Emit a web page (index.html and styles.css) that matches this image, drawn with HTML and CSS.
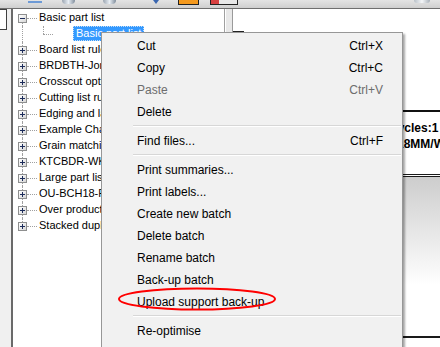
FILE: index.html
```html
<!doctype html>
<html lang="en">
<head>
    <meta charset="UTF-8">
    <title>Batches</title>
    <link rel="stylesheet" href="styles.css">
</head>
<body>

<div class="toolbar">
    <span class="tb tb-line"></span>
    <span class="tb tb-disk"></span>
    <span class="tb tb-disk2"></span>
    <span class="tb tb-arrow"></span>
    <span class="tb tb-orange"></span>
    <span class="tb tb-red"></span>
    <span class="tb tb-help"></span>
</div>

<div class="main">
    <div class="side">
        <div class="side-box"></div>
    </div>

    <div class="tree">
        <div class="row first">
            <span class="twig"><span class="exp"></span></span>
            <span class="label">Basic part list</span>
        </div>
        <div class="row child">
            <span class="twig"></span>
            <span class="twig2"></span>
            <span class="label selected">Basic part list</span>
        </div>
        <div class="row"><span class="twig"><span class="exp plus"></span></span><span class="label">Board list rules</span></div>
        <div class="row"><span class="twig"><span class="exp plus"></span></span><span class="label">BRDBTH-Jones</span></div>
        <div class="row"><span class="twig"><span class="exp plus"></span></span><span class="label">Crosscut options</span></div>
        <div class="row"><span class="twig"><span class="exp plus"></span></span><span class="label">Cutting list rules</span></div>
        <div class="row"><span class="twig"><span class="exp plus"></span></span><span class="label">Edging and labels</span></div>
        <div class="row"><span class="twig"><span class="exp plus"></span></span><span class="label">Example Chairs</span></div>
        <div class="row"><span class="twig"><span class="exp plus"></span></span><span class="label">Grain matching</span></div>
        <div class="row"><span class="twig"><span class="exp plus"></span></span><span class="label">KTCBDR-WK22</span></div>
        <div class="row"><span class="twig"><span class="exp plus"></span></span><span class="label">Large part list</span></div>
        <div class="row"><span class="twig"><span class="exp plus"></span></span><span class="label">OU-BCH18-F1</span></div>
        <div class="row"><span class="twig"><span class="exp plus"></span></span><span class="label">Over production</span></div>
        <div class="row last"><span class="twig"><span class="exp plus"></span></span><span class="label">Stacked duplicates</span></div>
    </div>

    <div class="splitter"></div>

    <div class="view">
        <div class="corner"></div>
        <div class="info">
            <div class="info-line first-line">Cycles:1</div>
            <div class="info-line second-line">18MM/WHITE</div>
        </div>
        <div class="chart"></div>
    </div>
</div>

<!-- context menu -->
<div class="menu">
    <div class="item"><span>Cut</span><span>Ctrl+X</span></div>
    <div class="item"><span>Copy</span><span>Ctrl+C</span></div>
    <div class="item disabled"><span>Paste</span><span>Ctrl+V</span></div>
    <div class="item"><span>Delete</span></div>
    <div class="sep"></div>
    <div class="item"><span>Find files...</span><span>Ctrl+F</span></div>
    <div class="sep"></div>
    <div class="item"><span>Print summaries...</span></div>
    <div class="item"><span>Print labels...</span></div>
    <div class="item"><span>Create new batch</span></div>
    <div class="item"><span>Delete batch</span></div>
    <div class="item"><span>Rename batch</span></div>
    <div class="item"><span>Back-up batch</span></div>
    <div class="item"><span>Upload support back-up</span></div>
    <div class="sep"></div>
    <div class="item"><span>Re-optimise</span></div>
</div>

<svg class="ring" width="162" height="26" viewBox="0 0 162 26">
    <ellipse cx="80" cy="13" rx="78" ry="10.5" fill="none" stroke="#ff0000" stroke-width="2"/>
</svg>

</body>
</html>
```

FILE: styles.css
```css
body {
    margin: 0;
    width: 440px;
    height: 347px;
    overflow: hidden;
    background: #f0f0f0;
    font-family: "Liberation Sans", Arial, sans-serif;
    position: relative;
}

/* toolbar, only the bottom of it shows */
.toolbar {
    height: 8px;
    border-bottom: 1px solid #6f6f6f;
    background: linear-gradient(#e4e4e4, #cfcfcf);
    display: flex;
    align-items: flex-start;
    overflow: hidden;
}
.tb {
    display: block;
    flex: none;
}
.tb-line {
    margin-left: 28px;
    margin-top: 1px;
    width: 14px;
    height: 2px;
    background: #6d9ad6;
}
.tb-disk {
    margin-left: 20px;
    width: 13px;
    height: 4px;
    border-radius: 0 0 4px 4px;
    background: linear-gradient(90deg, #9aa4b0, #e8eef4, #7d8a99);
}
.tb-disk2 {
    margin-left: 28px;
    width: 13px;
    height: 4px;
    border-radius: 0 0 4px 4px;
    background: linear-gradient(90deg, #9aa4b0, #e8eef4, #7d8a99);
}
.tb-arrow {
    margin-left: 37px;
    width: 0;
    height: 0;
    border-left: 3px solid transparent;
    border-right: 3px solid transparent;
    border-top: 4px solid #3a66b0;
}
.tb-orange {
    margin-left: 19px;
    width: 19px;
    height: 4px;
    background: #f59a1e;
    border: 1px solid #222;
    border-top: none;
}
.tb-red {
    margin-left: 11px;
    width: 26px;
    height: 4px;
    border: 1px solid #222;
    border-top: none;
    background: linear-gradient(90deg, #d84040 0 8px, #e8e8e8 8px);
}
.tb-help {
    margin-left: 176px;
    width: 16px;
    height: 3px;
    border-radius: 0 0 8px 8px;
    background: linear-gradient(90deg, #b8c0c8, #f4f6f8, #a8b0b8);
}

.main {
    display: flex;
    height: 338px;
}

.side {
    width: 11px;
    flex: none;
}
.side-box {
    width: 7px;
    height: 21px;
    box-sizing: border-box;
    background: #fff;
    border: 1px solid #404040;
    border-left: none;
}

/* tree */
.tree {
    width: 211px;
    flex: none;
    background: #fff;
    border-left: 2px solid #6a6a6a;
    border-right: 1px solid #a0a0a0;
    padding-top: 1px;
    font-size: 11px;
    color: #000;
}
.row {
    display: flex;
    height: 16px;
    white-space: nowrap;
}
.twig {
    position: relative;
    width: 26px;
    flex: none;
}
.twig::before {
    content: "";
    position: absolute;
    left: 9px;
    top: 0;
    bottom: 0;
    border-left: 1px dotted #a0a0a0;
}
.twig::after {
    content: "";
    position: absolute;
    left: 14px;
    top: 8px;
    width: 10px;
    border-top: 1px dotted #a0a0a0;
}
.row.first .twig::before {
    top: 8px;
}
.row.last .twig::before {
    bottom: 8px;
}
.row.child .twig::after {
    display: none;
}
.twig2 {
    position: relative;
    width: 34px;
    flex: none;
}
.twig2::before {
    content: "";
    position: absolute;
    left: 4px;
    top: 0;
    height: 8px;
    border-left: 1px dotted #a0a0a0;
}
.twig2::after {
    content: "";
    position: absolute;
    left: 4px;
    top: 8px;
    width: 10px;
    border-top: 1px dotted #a0a0a0;
}
.exp {
    position: absolute;
    left: 5px;
    top: 4px;
    width: 9px;
    height: 9px;
    box-sizing: border-box;
    border: 1px solid #8e8f8f;
    background: linear-gradient(135deg, #ffffff, #d6d6d6);
    z-index: 1;
}
.exp::before {
    content: "";
    position: absolute;
    left: 1px;
    top: 3px;
    width: 5px;
    height: 1px;
    background: #1c2c5a;
}
.exp.plus::after {
    content: "";
    position: absolute;
    left: 3px;
    top: 1px;
    width: 1px;
    height: 5px;
    background: #1c2c5a;
}
.label {
    height: 15px;
    line-height: 15px;
}
.label.selected {
    background: #3399ff;
    color: #fff;
    padding: 0 2px;
    border: 1px dotted #c7def5;
    line-height: 13px;
    box-sizing: border-box;
}

.splitter {
    width: 6px;
    flex: none;
    background: #e8e8e8;
    border-left: 1px solid #fff;
    border-right: 1px solid #9a9a9a;
}

/* right view */
.view {
    flex: 1;
    background: #fff;
    display: flex;
    flex-direction: column;
    overflow: hidden;
}
.corner {
    margin-top: 22px;
    width: 11px;
    height: 1px;
    background: #222;
}
.info {
    margin-top: 78px;
    border-top: 2px solid #111;
    padding-top: 8px;
    font-size: 12px;
    font-weight: bold;
    white-space: nowrap;
}
.info-line {
    line-height: 16px;
}
.first-line {
    padding-left: 156px;
}
.second-line {
    padding-left: 164px;
}
.chart {
    margin-top: 22px;
    height: 159px;
    flex: none;
    border-top: 3px double #1a1a1a;
    border-bottom: 2px solid #1a1a1a;
    background: linear-gradient(#cdcdcd, #ffffff 68%);
}

/* context menu */
.menu {
    position: absolute;
    left: 101px;
    top: 32px;
    width: 302px;
    box-sizing: border-box;
    background: #f1f1f1;
    border: 1px solid #979797;
    box-shadow: 2px 2px 2px rgba(0, 0, 0, 0.35);
    padding: 2px 0 24px;
    font-size: 12px;
    color: #000;
}
.item {
    height: 22px;
    line-height: 22px;
    display: flex;
    justify-content: space-between;
    padding: 0 19px 0 35px;
}
.item.disabled {
    color: #6d6d6d;
}
.sep {
    height: 1px;
    background: #d7d7d7;
    border-bottom: 1px solid #fff;
    margin: 2px 1px 3px 31px;
}

.ring {
    position: absolute;
    left: 117px;
    top: 286px;
}
```
